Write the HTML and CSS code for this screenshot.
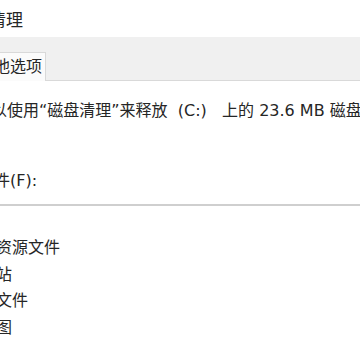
FILE: index.html
```html
<!DOCTYPE html>
<html lang="zh-CN">
<head>
    <meta charset="UTF-8">
    <title>磁盘清理</title>
    <link rel="stylesheet" href="styles.css">
</head>
<body>
    <div class="window">
        <div class="titlebar">
            <span class="title">磁盘清理</span>
        </div>

        <div class="tabs">
            <div class="tab">其他选项</div>
        </div>

        <div class="panel">
            <p class="summary">你可以使用“磁盘清理”来释放&nbsp; (C:)&nbsp;&nbsp; 上的 23.6 MB 磁盘空间。</p>
            <p class="label">要删除的文件(F):</p>

            <ul class="filelist">
                <li>语言资源文件</li>
                <li>回收站</li>
                <li>临时文件</li>
                <li>缩略图</li>
            </ul>
        </div>
    </div>
</body>
</html>
```

FILE: styles.css
```css
* {
    margin: 0;
    padding: 0;
    box-sizing: border-box;
}

body {
    width: 360px;
    height: 360px;
    overflow: hidden;
    background: #fff;
    font-family: "DejaVu Sans", "Noto Sans CJK SC", sans-serif;
    color: #262626;
}

.window {
    display: flex;
    flex-direction: column;
    width: 360px;
}

.titlebar {
    height: 37px;
    display: flex;
    align-items: center;
    background: #fff;
}

.title {
    margin-left: -45px;
    font-size: 17px;
    white-space: nowrap;
}

.tabs {
    height: 44px;
    background: #f0f0f0;
    border-bottom: 1px solid #d9d9d9;
    display: flex;
    align-items: flex-end;
}

.tab {
    margin-left: -33px;
    height: 29px;
    padding: 0 3px 0 10px;
    margin-bottom: -1px;
    background: #fbfbfb;
    border: 1px solid #d9d9d9;
    border-bottom: none;
    font-size: 16px;
    line-height: 27px;
    white-space: nowrap;
}

.panel {
    display: flex;
    flex-direction: column;
}

.summary {
    margin-top: 20px;
    margin-left: -41px;
    font-size: 16px;
    line-height: 20px;
    white-space: nowrap;
}

.label {
    margin-top: 50px;
    margin-left: -86px;
    font-size: 16px;
    line-height: 20px;
    white-space: nowrap;
}

.filelist {
    list-style: none;
    margin-top: 13px;
    border-top: 2px solid #cfcfcf;
    padding-top: 29px;
}

.filelist li {
    margin-left: -36px;
    font-size: 16px;
    line-height: 26.5px;
    white-space: nowrap;
}
```
